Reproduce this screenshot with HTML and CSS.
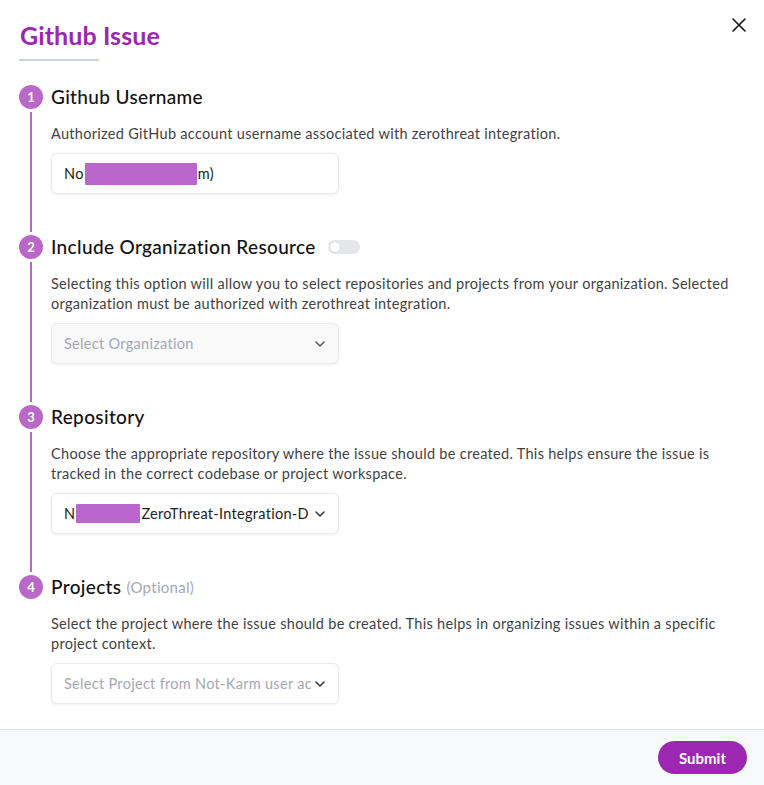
FILE: index.html
```html
<!DOCTYPE html>
<html lang="en">
<head>
<meta charset="utf-8">
<title>Github Issue</title>
<link rel="stylesheet" href="styles.css">
</head>
<body>
<div class="modal">
  <div class="modal-body">
    <div class="header">
      <h1 class="title">Github Issue</h1>
      <button class="close" aria-label="Close">
        <svg width="16" height="16" viewBox="0 0 16 16"><path d="M2 2L14 14M14 2L2 14" stroke="#111" stroke-width="1.6" stroke-linecap="round"/></svg>
      </button>
    </div>
    <div class="title-rule"></div>

    <div class="steps">
      <div class="step">
        <div class="marker"><span class="num">1</span><span class="line"></span></div>
        <div class="content">
          <h2 class="step-title">Github Username</h2>
          <p class="desc">Authorized GitHub account username associated with zerothreat integration.</p>
          <div class="field"><span>No</span><span class="redact r1"></span><span>m)</span></div>
        </div>
      </div>

      <div class="step">
        <div class="marker"><span class="num">2</span><span class="line"></span></div>
        <div class="content">
          <h2 class="step-title">Include Organization Resource <span class="toggle"><span class="knob"></span></span></h2>
          <p class="desc">Selecting this option will allow you to select repositories and projects from your organization. Selected organization must be authorized with zerothreat integration.</p>
          <div class="field select disabled"><span class="placeholder">Select Organization</span><svg class="chev" width="10" height="6" viewBox="0 0 10 6"><path d="M1 1L5 5L9 1" fill="none" stroke="#555" stroke-width="1.5" stroke-linecap="round" stroke-linejoin="round"/></svg></div>
        </div>
      </div>

      <div class="step">
        <div class="marker"><span class="num">3</span><span class="line"></span></div>
        <div class="content">
          <h2 class="step-title">Repository</h2>
          <p class="desc">Choose the appropriate repository where the issue should be created. This helps ensure the issue is tracked in the correct codebase or project workspace.</p>
          <div class="field select"><span class="val"><span>N</span><span class="redact r2"></span><span>ZeroThreat-Integration-D</span></span><svg class="chev" width="10" height="6" viewBox="0 0 10 6"><path d="M1 1L5 5L9 1" fill="none" stroke="#333" stroke-width="1.5" stroke-linecap="round" stroke-linejoin="round"/></svg></div>
        </div>
      </div>

      <div class="step last">
        <div class="marker"><span class="num">4</span></div>
        <div class="content">
          <h2 class="step-title">Projects <span class="optional">(Optional)</span></h2>
          <p class="desc">Select the project where the issue should be created. This helps in organizing issues within a specific project context.</p>
          <div class="field select"><span class="placeholder val">Select Project from Not-Karm user ac</span><svg class="chev" width="10" height="6" viewBox="0 0 10 6"><path d="M1 1L5 5L9 1" fill="none" stroke="#333" stroke-width="1.5" stroke-linecap="round" stroke-linejoin="round"/></svg></div>
        </div>
      </div>
    </div>
  </div>
  <div class="footer">
    <button class="submit">Submit</button>
  </div>
</div>
</body>
</html>
```

FILE: styles.css
```css
* { box-sizing: border-box; }
html, body { margin: 0; padding: 0; }
body {
  font-family: "Lato", "Noto Sans", sans-serif;
  color: #111;
  background: #fff;
  width: 764px;
  height: 785px;
  overflow: hidden;
}
.modal {
  display: flex;
  flex-direction: column;
  height: 785px;
}
.modal-body {
  flex: 1;
  padding: 20px 18px 0 19px;
}
.header {
  display: flex;
  justify-content: space-between;
  align-items: flex-start;
}
.title {
  margin: 0 0 0 1px;
  font-size: 25px;
  line-height: 30px;
  font-weight: 700;
  color: #9c27b0;
  letter-spacing: 0.1px;
}
.close {
  border: 0;
  background: none;
  padding: 0;
  margin: -3px -1px 0 0;
  width: 16px;
  height: 16px;
  cursor: pointer;
}
.title-rule {
  width: 80px;
  height: 2px;
  background: #c9d3e0;
  margin-top: 9px;
}
.steps {
  margin-top: 24px;
}
.step {
  display: flex;
  gap: 8px;
}
.marker {
  width: 24px;
  display: flex;
  flex-direction: column;
  align-items: center;
  flex-shrink: 0;
}
.num {
  width: 24px;
  height: 24px;
  border-radius: 50%;
  background: #ba68c8;
  color: #fff;
  font-size: 13px;
  font-weight: 700;
  display: flex;
  align-items: center;
  justify-content: center;
  flex-shrink: 0;
}
.line {
  flex: 1;
  width: 2px;
  background: #ba68c8;
  margin: 3px 0 3px;
}
.content {
  flex: 1;
  padding-bottom: 41px;
}
.step.last .content { padding-bottom: 0; }
.step-title {
  margin: 0;
  font-size: 19px;
  line-height: 24px;
  font-weight: 500;
  letter-spacing: 0.35px;
  display: flex;
  align-items: center;
  gap: 5px;
}
.optional {
  font-size: 15px;
  color: #a4a7b3;
  font-weight: 400;
  letter-spacing: 0.3px;
}
.toggle {
  width: 32px;
  height: 14px;
  border-radius: 7px;
  background: #e4e6ea;
  margin-left: 7px;
  display: flex;
  align-items: center;
  padding-left: 2px;
}
.knob {
  width: 10px;
  height: 10px;
  border-radius: 50%;
  background: #fff;
  box-shadow: 0 0 1px rgba(0,0,0,0.2);
}
.desc {
  margin: 15px 0 9px;
  font-size: 14.5px;
  line-height: 20px;
  letter-spacing: 0.3px;
  color: #3f3f46;
  padding-right: 0;
}
.field {
  width: 288px;
  height: 41px;
  border: 1px solid #e9eaee;
  border-radius: 6px;
  box-shadow: 0 1px 3px rgba(0,0,0,0.07);
  background: #fff;
  display: flex;
  align-items: center;
  padding: 0 12px;
  font-size: 14.5px;
  letter-spacing: 0.3px;
  color: #222;
}
.field.select {
  justify-content: space-between;
  padding-right: 13px;
}
.field.disabled { background: #f9f9fa; }
.placeholder { color: #a3a7b4; }
.val {
  display: flex;
  align-items: center;
  white-space: nowrap;
  overflow: hidden;
}
.redact {
  display: inline-block;
  background: #bb66cc;
  border-radius: 1px;
}
.r1 { width: 112px; height: 22px; margin: 0 1px 0 1px; }
.r2 { width: 64px; height: 19px; margin: 0 1px; }
.chev { flex-shrink: 0; margin-left: 4px; }
.footer {
  height: 56px;
  border-top: 1px solid #e3e4e8;
  background: #f8f9fa;
  display: flex;
  align-items: center;
  justify-content: flex-end;
  padding-right: 17px;
}
.submit {
  border: 0;
  background: #9c27b0;
  color: #fff;
  font-family: inherit;
  font-size: 15px;
  font-weight: 700;
  height: 33px;
  width: 89px;
  border-radius: 17px;
  cursor: pointer;
}
```
